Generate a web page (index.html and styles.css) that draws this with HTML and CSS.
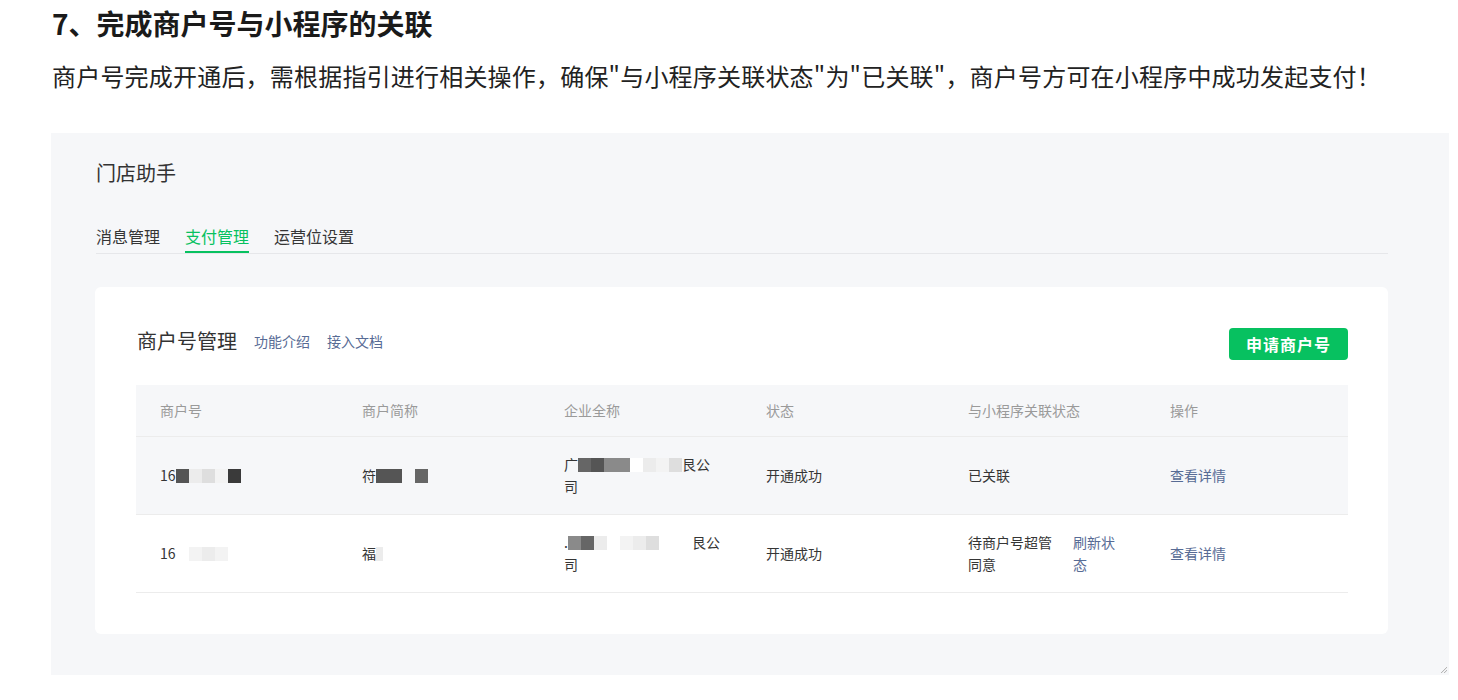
FILE: index.html
```html
<!DOCTYPE html>
<html lang="zh-CN">

<head>
    <meta charset="UTF-8">
    <meta name="viewport" content="width=device-width, initial-scale=1.0">
    <title>完成商户号与小程序的关联</title>
    <link rel="stylesheet" href="styles.css">
</head>

<body>
    <div class="page">
        <h2 class="step-title">7、完成商户号与小程序的关联</h2>
        <p class="step-desc">商户号完成开通后，需根据指引进行相关操作，确保"与小程序关联状态"为"已关联"，商户号方可在小程序中成功发起支付！</p>

        <div class="shot">
            <div class="app-title">门店助手</div>

            <div class="tabs">
                <span class="tab">消息管理</span>
                <span class="tab active">支付管理</span>
                <span class="tab">运营位设置</span>
            </div>

            <div class="card">
                <div class="card-head">
                    <div class="card-title">
                        <span class="name">商户号管理</span>
                        <a class="link">功能介绍</a>
                        <a class="link">接入文档</a>
                    </div>
                    <button class="primary">申请商户号</button>
                </div>

                <table class="mch-table">
                    <thead>
                        <tr>
                            <th>商户号</th>
                            <th>商户简称</th>
                            <th>企业全称</th>
                            <th>状态</th>
                            <th>与小程序关联状态</th>
                            <th>操作</th>
                        </tr>
                    </thead>
                    <tbody>
                        <tr class="hover">
                            <td>16<span class="mask w1 c-dark"></span><span class="mask w1 c-l1"></span><span class="mask w1 c-l3"></span><span class="mask w1 c-l2"></span><span class="mask w1 c-black"></span></td>
                            <td>符<span class="mask w2 c-dark"></span><span class="mask w1 c-none"></span><span class="mask w1 c-mid"></span></td>
                            <td class="nowrap">广<span class="mask w1 c-mid"></span><span class="mask w1 c-dark"></span><span class="mask w2 c-grey"></span><span class="mask w1 c-white"></span><span class="mask w1 c-l1"></span><span class="mask w1 c-l2"></span><span class="mask w1 c-l3"></span>艮公<br>司</td>
                            <td>开通成功</td>
                            <td>已关联</td>
                            <td><a class="link">查看详情</a></td>
                        </tr>
                        <tr>
                            <td>16<span class="mask w1 c-none"></span><span class="mask w1 c-l2"></span><span class="mask w1 c-l1"></span><span class="mask w1 c-l2"></span></td>
                            <td>福<span class="mask w0 c-l1"></span></td>
                            <td class="nowrap">.<span class="mask w1 c-grey"></span><span class="mask w1 c-mid"></span><span class="mask w1 c-l1"></span><span class="mask w1 c-none"></span><span class="mask w1 c-l2"></span><span class="mask w1 c-l1"></span><span class="mask w1 c-l3"></span><span class="mask w2 c-none"></span><span class="mask w0 c-none"></span>艮公<br>司</td>
                            <td>开通成功</td>
                            <td>
                                <div class="bind">
                                    <span class="bind-text">待商户号超管同意</span>
                                    <a class="link bind-link">刷新状态</a>
                                </div>
                            </td>
                            <td><a class="link">查看详情</a></td>
                        </tr>
                    </tbody>
                </table>
            </div>
        </div>
    </div>
</body>

</html>
```

FILE: styles.css
```css
body {
    font-family: "Noto Sans CJK SC", "Noto Sans", sans-serif;
    color: #1a1a1a;
    background-color: #fff;
    margin: 0;
    padding: 0;
}

.page {
    padding: 5px 9px 0 51px;
}

.step-title {
    font-size: 28px;
    line-height: 36px;
    font-weight: bold;
    margin: 0 0 19px 1px;
}

.step-desc {
    font-size: 24px;
    line-height: 32px;
    letter-spacing: 0.2px;
    margin: 0 0 41px 1px;
    color: #222;
}

.shot {
    position: relative;
    background-color: #f6f7f9;
    padding: 26px 61px 41px 44px;
}

.shot::after {
    content: "";
    position: absolute;
    right: 2px;
    bottom: 2px;
    width: 6px;
    height: 6px;
    background: linear-gradient(135deg, transparent 45%, #b5b5b5 50%, transparent 60%, transparent 70%, #b5b5b5 75%, transparent 85%);
}

.app-title {
    font-size: 20px;
    line-height: 28px;
    color: #333;
    margin-left: 1px;
    margin-bottom: 37px;
}

.tabs {
    display: flex;
    gap: 25px;
    margin-left: 1px;
    border-bottom: 1px solid #e6e7ea;
    margin-bottom: 33px;
}

.tab {
    font-size: 16px;
    line-height: 24px;
    color: #353535;
    padding-bottom: 3px;
    border-bottom: 2px solid transparent;
}

.tab.active {
    color: #07c160;
    border-bottom-color: #07c160;
}

.card {
    background: white;
    border-radius: 6px;
    padding: 40px 40px 41px 41px;
}

.card-head {
    display: flex;
    justify-content: space-between;
    align-items: center;
    margin-bottom: 24px;
}

.card-title {
    display: flex;
    align-items: center;
    gap: 17px;
    padding-bottom: 6px;
}

.card-title .name {
    font-size: 20px;
    line-height: 28px;
    color: #333;
    margin-left: 1px;
}

.link {
    color: #576b95;
    font-size: 14px;
    cursor: pointer;
}

button.primary {
    font-family: inherit;
    height: 32px;
    padding: 0 17px;
    background-color: #07c160;
    color: white;
    border: none;
    border-radius: 4px;
    font-size: 16px;
    font-weight: bold;
    letter-spacing: 1px;
    cursor: pointer;
}

.mch-table {
    width: 100%;
    table-layout: fixed;
    border-collapse: collapse;
    font-size: 14px;
}

.mch-table th {
    background-color: #f6f7f9;
    color: #9a9a9a;
    font-weight: normal;
    text-align: left;
    line-height: 22px;
    padding: 14px 24px 15px;
}

.mch-table td {
    color: #353535;
    line-height: 22px;
    padding: 16px 24px 17px;
    border-top: 1px solid #ececec;
    border-bottom: 1px solid #ececec;
    vertical-align: middle;
}

.mch-table td.nowrap {
    white-space: nowrap;
    overflow: hidden;
}

.mch-table tr.hover td {
    background-color: #f6f7f9;
}

.mask {
    display: inline-block;
    height: 14px;
    vertical-align: -2px;
}

.w0 { width: 7px; }
.w1 { width: 13px; }
.w2 { width: 26px; }

.c-black { background: #3a3a3a; }
.c-dark { background: #555; }
.c-mid { background: #666; }
.c-grey { background: #8a8a8a; }
.c-l3 { background: #dedede; }
.c-l1 { background: #ececec; }
.c-l2 { background: #f3f3f3; }
.c-white { background: #fff; }
.c-none { background: transparent; }

.bind {
    display: flex;
    align-items: center;
}

.bind-text {
    width: 84px;
    flex: none;
}

.bind-link {
    width: 42px;
    margin-left: 21px;
}
```
